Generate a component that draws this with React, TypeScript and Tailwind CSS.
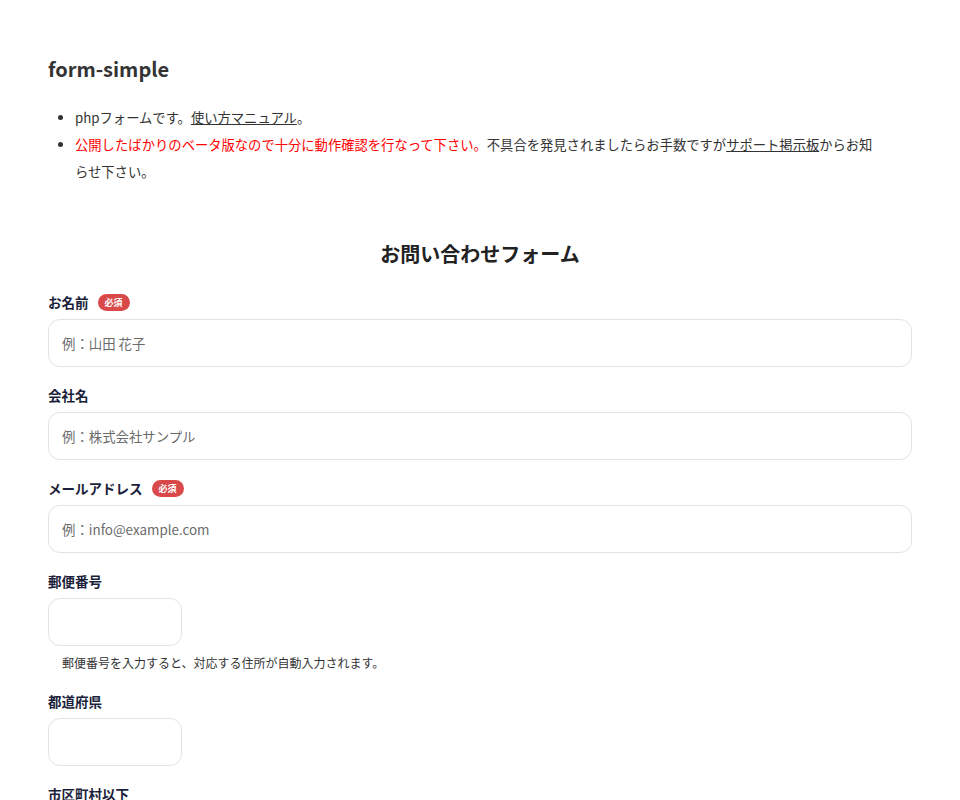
import React from "react";

function Badge() {
    return (
        <span className="ml-[9px] inline-flex h-[17px] items-center rounded-full bg-[#d9494a] px-[7px] text-[9px] font-bold leading-none text-white">
            必須
        </span>
    );
}

function Field({ label, required, placeholder, short, help }: { label: string; required?: boolean; placeholder?: string; short?: boolean; help?: string }) {
    return (
        <div className="mb-[18px]">
            <div className="flex h-5 items-center text-[13.5px] font-bold text-[#1c1f3c]">
                {label}
                {required && <Badge />}
            </div>
            <input
                type="text"
                placeholder={placeholder}
                className={
                    "mt-[7px] h-12 rounded-xl border border-[#e0e3ea] bg-white px-[13px] text-[13.4px] text-[#333] outline-none placeholder:text-[#6b6b6b] " +
                    (short ? "w-[134px]" : "w-full")
                }
            />
            {help && <p className="mt-[7px] pl-[14px] text-[12px] leading-5 text-[#333]">{help}</p>}
        </div>
    );
}

export default function App() {
    return (
        <div className="min-h-[800px] bg-white px-12 pt-[50px] font-['Noto_Sans_CJK_JP','Noto_Sans',sans-serif] text-[#333]">
            <h1 className="text-[20px] font-bold leading-[38px]">form-simple</h1>

            <ul className="mt-4 list-disc pl-[27px] pr-8 text-[13.3px] leading-[27px]">
                <li>
                    phpフォームです。<a href="#" className="underline">使い方マニュアル</a>。
                </li>
                <li>
                    <span className="text-[#ff0000]">公開したばかりのベータ版なので十分に動作確認を行なって下さい。</span>
                    不具合を発見されましたらお手数ですが<a href="#" className="underline">サポート掲示板</a>からお知らせ下さい。
                </li>
            </ul>

            <h2 className="mt-[54px] text-center text-[20px] font-bold leading-[30px] text-[#222]">お問い合わせフォーム</h2>

            <form className="mt-[23px]">
                <Field label="お名前" required placeholder="例：山田 花子" />
                <Field label="会社名" placeholder="例：株式会社サンプル" />
                <Field label="メールアドレス" required placeholder="例：info@example.com" />
                <Field label="郵便番号" short help="郵便番号を入力すると、対応する住所が自動入力されます。" />
                <Field label="都道府県" short />
                <Field label="市区町村以下" placeholder="" />
            </form>
        </div>
    );
}
